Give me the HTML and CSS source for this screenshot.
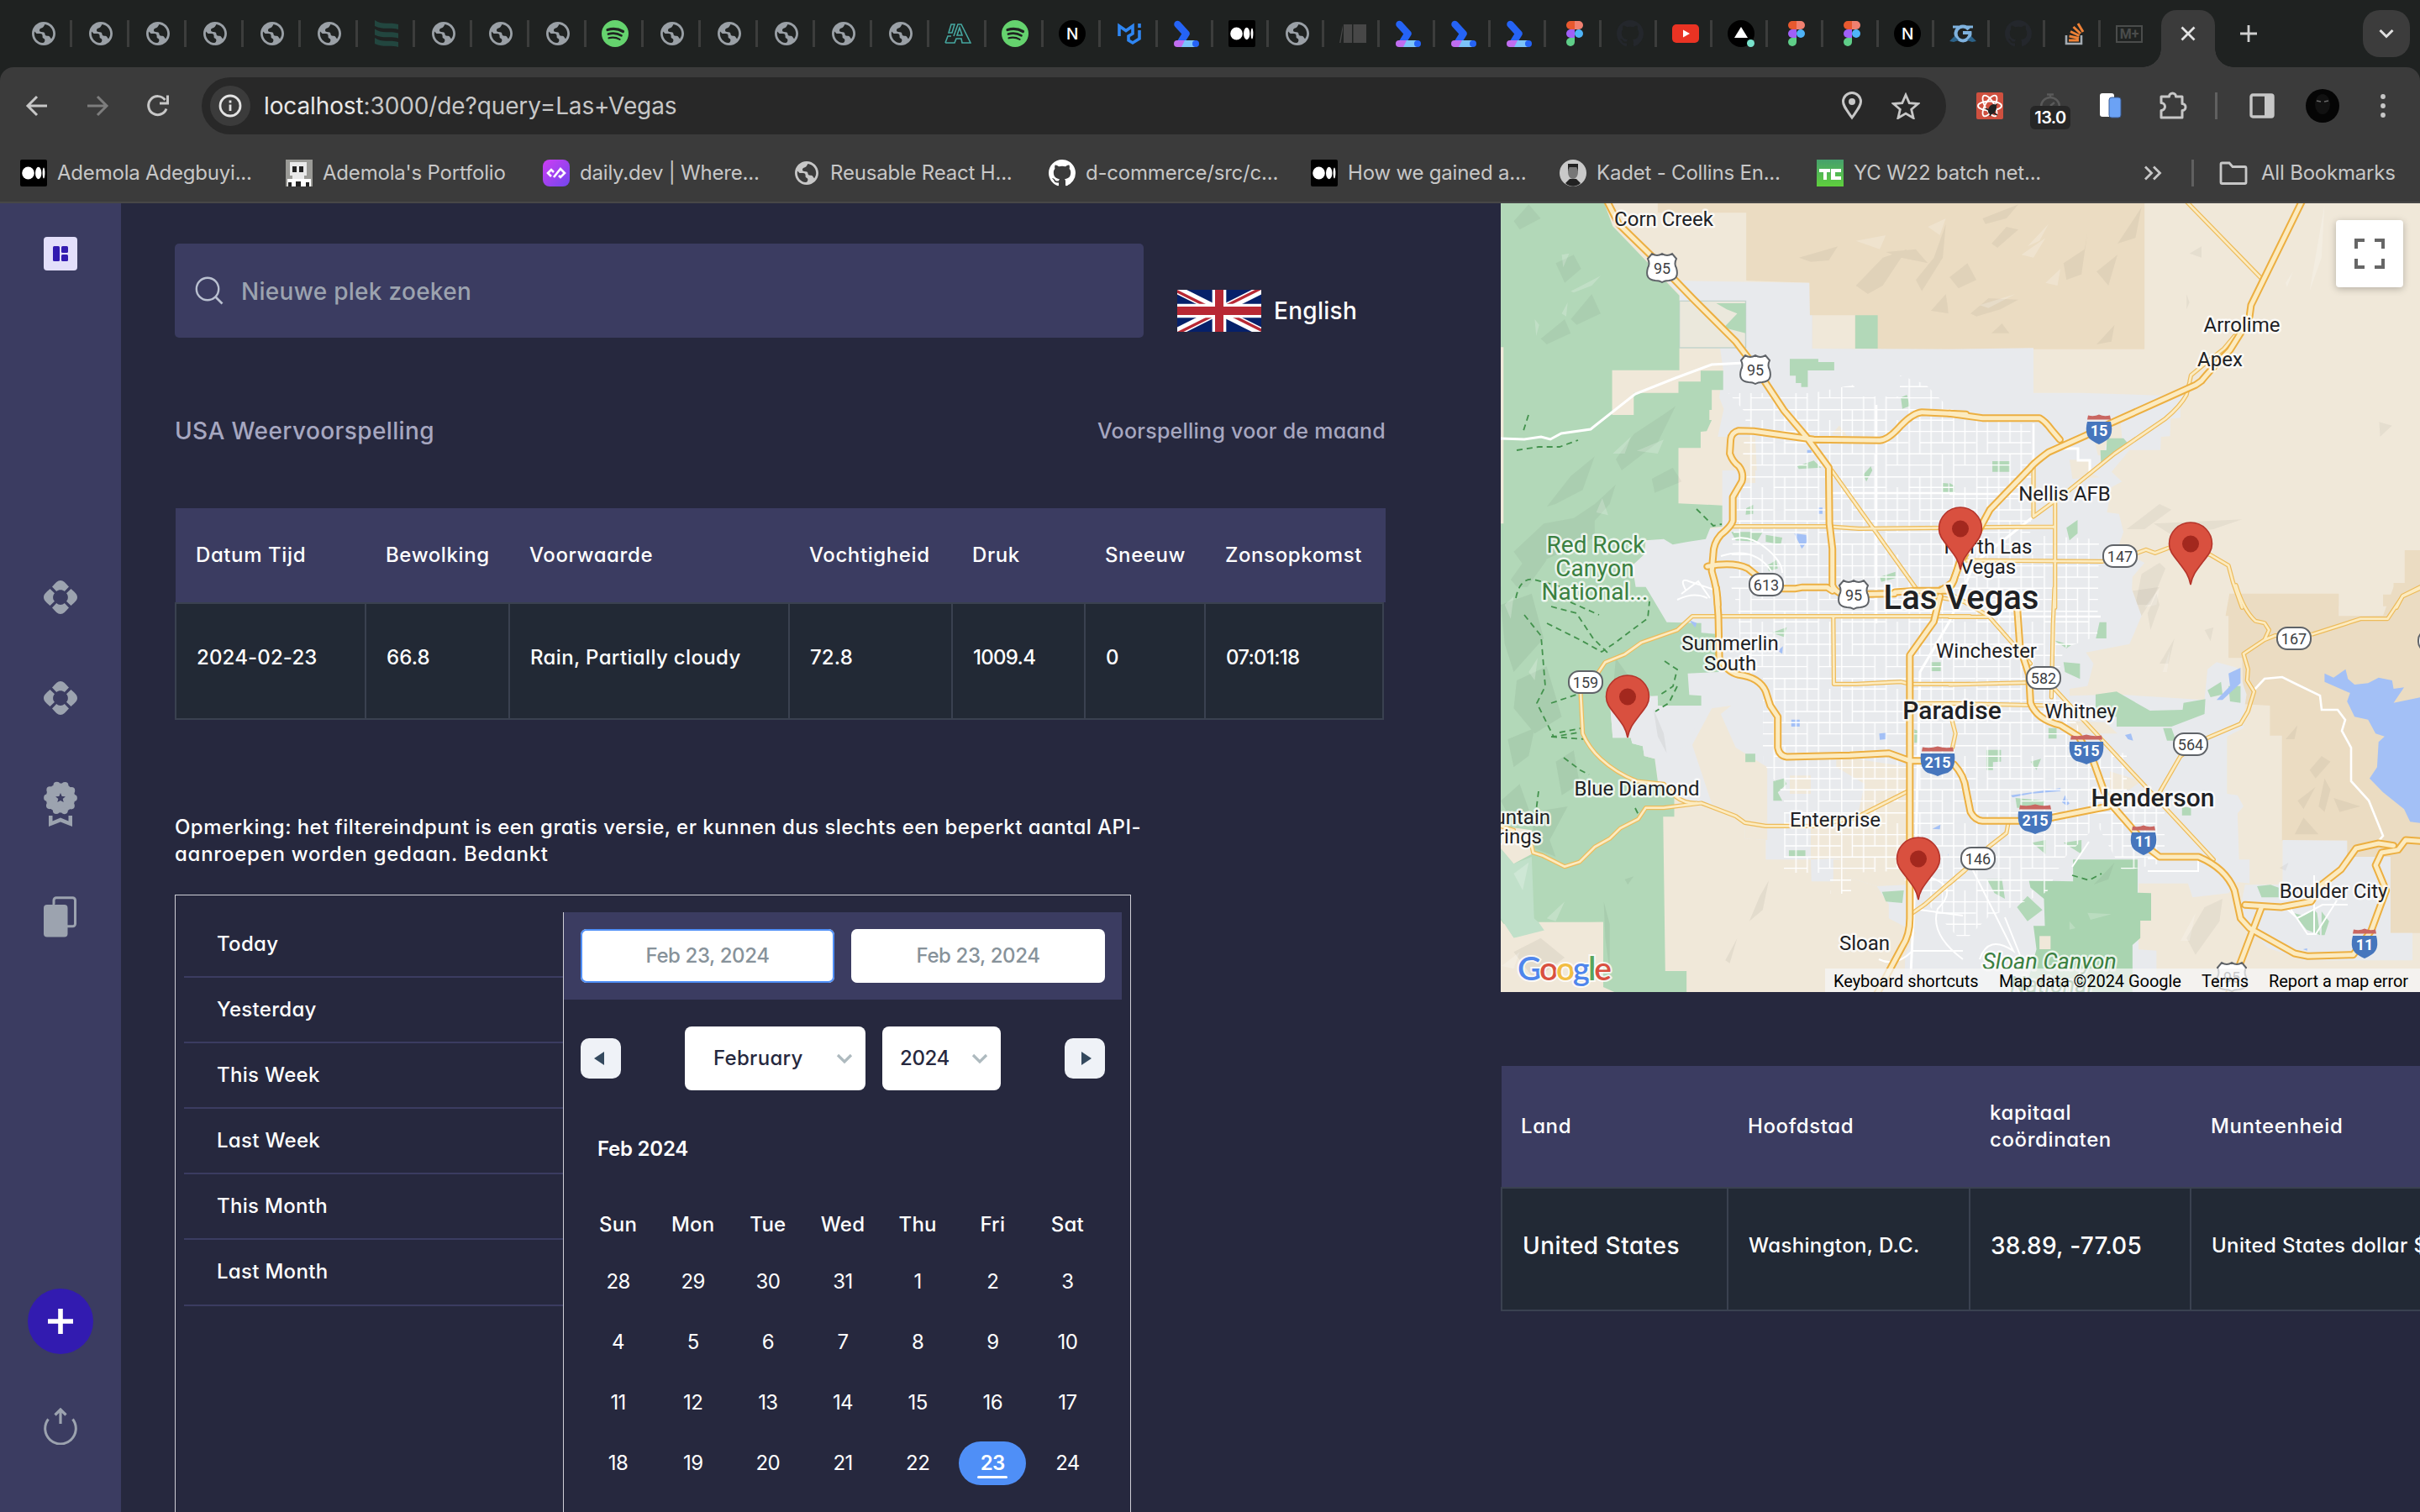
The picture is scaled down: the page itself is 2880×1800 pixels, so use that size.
FILE: index.html
```html
<!DOCTYPE html>
<html lang="nl">
<head>
<meta charset="utf-8">
<title>Weather dashboard</title>
<link rel="stylesheet" href="styles.css">
</head>
<body>
<svg class="defs" width="0" height="0">
  <symbol id="globe" viewBox="2 2 20 20"><path fill="currentColor" d="M12 2C6.48 2 2 6.48 2 12s4.48 10 10 10 10-4.48 10-10S17.52 2 12 2zm-1 17.93c-3.95-.49-7-3.85-7-7.93 0-.62.08-1.21.21-1.79L6 12h3c1.500 0 2 1 2 2v1c0 1 2 1 2 2.500 0 1-.5 2.500-2 2.430zM18.500 16.500C17 15 17.500 14 15 14c-1.500 0-2-1-2-2s-1-1.500-3-1.500S8 8 9.500 7.500 12 6.500 13 4.100c4 .5 7 3.900 7 7.900 0 1.600-.5 3.200-1.500 4.500z"/></symbol>
  <symbol id="spotify" viewBox="0 0 32 32"><circle cx="16" cy="16" r="16" fill="#65d36e"/><g fill="none" stroke="#1f2221" stroke-linecap="round"><path stroke-width="3.200" d="M7 11.500c6-1.800 13-1.200 18.500 2"/><path stroke-width="2.700" d="M8 16.500c5-1.500 11-.9 15.500 1.800"/><path stroke-width="2.200" d="M8.500 21.300c4.500-1.200 9-.7 13 1.600"/></g></symbol>
  <symbol id="github" viewBox="0 0 16 16"><path fill="currentColor" d="M8 0C3.580 0 0 3.580 0 8c0 3.540 2.290 6.530 5.470 7.590.4.070.55-.17.55-.38 0-.19-.01-.82-.01-1.490-2.010.37-2.530-.49-2.690-.94-.09-.23-.48-.94-.82-1.130-.28-.15-.68-.52-.01-.53.63-.01 1.080.58 1.230.82.72 1.210 1.870.87 2.330.66.070-.52.28-.87.51-1.070-1.780-.2-3.640-.89-3.640-3.950 0-.87.31-1.590.82-2.150-.08-.2-.36-1.020.08-2.120 0 0 .67-.21 2.200.82.64-.18 1.320-.27 2-.27s1.360.09 2 .27c1.530-1.040 2.200-.82 2.200-.82.44 1.100.16 1.920.08 2.120.51.56.82 1.270.82 2.150 0 3.070-1.870 3.750-3.650 3.950.29.25.54.73.54 1.480 0 1.070-.01 1.930-.01 2.200 0 .21.15.46.55.38A8.010 8.010 0 0 0 16 8c0-4.420-3.580-8-8-8z"/></symbol>
  <symbol id="next" viewBox="0 0 32 32"><circle cx="16" cy="16" r="16"/><text x="16" y="22.500" text-anchor="middle" font-family="Inter" font-size="19" font-weight="500" fill="#fff">N</text></symbol>
  <symbol id="medium" viewBox="0 0 32 32"><rect width="32" height="32" rx="2"/><ellipse cx="9.500" cy="16" rx="7.300" ry="7.600" fill="#fff"/><ellipse cx="21.700" cy="16" rx="3.700" ry="7.200" fill="#fff"/><ellipse cx="28" cy="16" rx="1.400" ry="6.400" fill="#fff"/></symbol>
  <symbol id="ribbon" viewBox="0 0 32 32"><path d="M5.500 5l10 11L8 28" fill="none" stroke="#2563f5" stroke-width="8.500" stroke-linejoin="round" stroke-linecap="round"/><path fill="#7cc4fa" d="M6 24h20v8H6z"/><path fill="#c06df0" d="M5 24h9l-4 8H5a4 4 0 0 1 0-8z"/><ellipse cx="27" cy="28" rx="4" ry="4" fill="#2563f5"/></symbol>
  <symbol id="figma" viewBox="0 0 20 30"><path fill="#e8592f" d="M5 0h5v10H5A5 5 0 0 1 5 0z"/><path fill="#f08070" d="M10 0h5a5 5 0 0 1 0 10h-5z"/><path fill="#a060f8" d="M5 10h5v10H5a5 5 0 0 1 0-10z"/><circle cx="15" cy="15" r="5" fill="#4fb4f8"/><path fill="#5fce88" d="M5 20h5v5a5 5 0 1 1-5-5z"/></symbol>
  <symbol id="buoy" viewBox="0 0 40 40"><g fill="#9ca3af"><path id="petal" d="M20 0C23.500 0 26 3 30 7.500L24.800 13C22.500 10.500 17.500 10.500 15.200 13L10 7.500C14 3 16.500 0 20 0z"/><use href="#petal" transform="rotate(90 20 20)"/><use href="#petal" transform="rotate(180 20 20)"/><use href="#petal" transform="rotate(270 20 20)"/></g></symbol>
  <symbol id="pin" viewBox="0 0 54 76"><path d="M27 75C25 64 21 59 12.500 48 5 38.500 1.500 34 1.500 26.500a25.500 25.500 0 0 1 51 0c0 7.500-3.500 12-11 21.500C33 59 29 64 27 75z" fill="#d9503f" stroke="#b5342a" stroke-width="1.600"/><circle cx="27" cy="26.500" r="10" fill="#a3281e"/></symbol>
</svg>

<header class="chrome">
  <div class="tabstrip">
    <i class="tab"><svg class="g"><use href="#globe"/></svg></i><i class="tab"><svg class="g"><use href="#globe"/></svg></i><i class="tab"><svg class="g"><use href="#globe"/></svg></i><i class="tab"><svg class="g"><use href="#globe"/></svg></i><i class="tab"><svg class="g"><use href="#globe"/></svg></i><i class="tab"><svg class="g"><use href="#globe"/></svg></i>
    <i class="tab"><svg class="i" viewBox="0 0 32 32"><g fill="#22463f"><path d="M2 0c8 6 18 2 28 5v6C20 8 12 12 2 7z"/><path d="M2 10.500c8 6 18 2 28 5v6c-10-3-18 1-28-4z"/><path d="M2 21c8 6 18 2 28 5v6c-10-3-18 1-28-4z"/></g></svg></i>
    <i class="tab"><svg class="g"><use href="#globe"/></svg></i><i class="tab"><svg class="g"><use href="#globe"/></svg></i><i class="tab"><svg class="g"><use href="#globe"/></svg></i>
    <i class="tab"><svg class="i"><use href="#spotify"/></svg></i>
    <i class="tab"><svg class="g"><use href="#globe"/></svg></i><i class="tab"><svg class="g"><use href="#globe"/></svg></i><i class="tab"><svg class="g"><use href="#globe"/></svg></i><i class="tab"><svg class="g"><use href="#globe"/></svg></i><i class="tab"><svg class="g"><use href="#globe"/></svg></i>
    <i class="tab"><svg class="i" viewBox="0 0 32 32"><path d="M1 27l3-8h4M5 15L8 5h4l-3 10zM1 27h11l2-5h6l1 5h10L20 5h-4l-5 14M18 9l-3 9h6z" fill="none" stroke="#46a7a0" stroke-width="1.600"/></svg></i>
    <i class="tab"><svg class="i"><use href="#spotify"/></svg></i>
    <i class="tab"><svg class="i"><use href="#next"/></svg></i>
    <i class="tab"><svg class="i" viewBox="0 0 32 32"><g fill="none" stroke="#2f86f2" stroke-width="3.600"><path d="M4 19V7l8 5.500L20 7v9l-5 3v5l5 3 8-5V12"/><path d="M28 4v5"/></g></svg></i>
    <i class="tab s"><svg class="i"><use href="#ribbon"/></svg></i>
    <i class="tab s"><svg class="i"><use href="#medium"/></svg></i>
    <i class="tab s"><svg class="g"><use href="#globe"/></svg></i>
    <i class="tab s"><svg class="i" viewBox="0 0 32 32"><path fill="#474747" d="M5 5h10v22H5zM16.500 5H32v22H16.500zM4 6v6L1.500 27H0z"/></svg></i>
    <i class="tab s"><svg class="i"><use href="#ribbon"/></svg></i><i class="tab s"><svg class="i"><use href="#ribbon"/></svg></i><i class="tab s"><svg class="i"><use href="#ribbon"/></svg></i>
    <i class="tab s"><svg class="f"><use href="#figma"/></svg></i>
    <i class="tab s"><svg class="i gh"><use href="#github"/></svg></i>
    <i class="tab s"><svg class="i" viewBox="0 0 32 32"><rect x="0" y="5" width="32" height="22" rx="5" fill="#ea3323"/><path fill="#fff" d="M13 11.500v9l8-4.500z"/></svg></i>
    <i class="tab s"><svg class="i" viewBox="0 0 32 32"><circle cx="16" cy="16" r="16"/><path fill="#fff" d="M16 8l8 13H8z"/><circle cx="27.500" cy="27.500" r="4.500" fill="#79e3cc"/></svg></i>
    <i class="tab s"><svg class="f"><use href="#figma"/></svg></i><i class="tab s"><svg class="f"><use href="#figma"/></svg></i>
    <i class="tab s"><svg class="i"><use href="#next"/></svg></i>
    <i class="tab s"><svg class="i" viewBox="0 0 32 32"><g fill="none" stroke="#7fb2de" stroke-width="4"><path d="M23 11a8.500 8.500 0 1 0 1.500 4H16"/><path d="M4 8h7M28 8h-7" stroke-width="3"/></g><path fill="#2c6288" d="M0 25l6-6 5 5-6 2zM32 25l-6-6-5 5 6 2z"/></svg></i>
    <i class="tab s"><svg class="i gh"><use href="#github"/></svg></i>
    <i class="tab s"><svg class="i" viewBox="0 0 32 32"><path d="M7 18v10h18V18" fill="none" stroke="#a3abb2" stroke-width="2.600"/><g stroke="#ee8136" stroke-width="3"><path d="M10 24h12M10.500 19l11.500 2.500M12 13.500l10.500 5M15.500 8l8.500 8M21 4l6 10"/></g></svg></i>
    <i class="tab s last"><svg class="i" viewBox="0 0 32 32"><rect x="1" y="7" width="30" height="19" fill="none" stroke="#4a4c4b" stroke-width="2"/><text x="16" y="22" text-anchor="middle" font-family="Roboto" font-weight="700" font-size="16" fill="#4a4c4b">M+</text></svg></i>
    <div class="tab-active"><svg width="64" height="68" viewBox="0 0 64 68"><path d="M25 21l15 15M40 21L25 36" transform="translate(-.5 -.5)" stroke="#e3e3e3" stroke-width="2.800"/></svg></div>
    <svg class="plus" width="22" height="22" viewBox="0 0 22 22"><path d="M11 1v20M1 11h20" stroke="#cfcfcf" stroke-width="2.800"/></svg>
    <div class="tabsearch"><svg width="18" height="12" viewBox="0 0 18 12"><path d="M1.500 2L9 9.500 16.500 2" fill="none" stroke="#e0e0e0" stroke-width="3"/></svg></div>
  </div>
  <div class="toolbar">
    <svg class="nav" width="28" height="28" viewBox="0 0 28 28"><path d="M26 14H3M14 3L3 14l11 11" fill="none" stroke="#c7c7c7" stroke-width="3"/></svg>
    <svg class="nav" width="28" height="28" viewBox="0 0 28 28"><path d="M2 14h23M14 3l11 11-11 11" fill="none" stroke="#7d7d7d" stroke-width="3"/></svg>
    <svg class="nav" width="28" height="28" viewBox="0 0 28 28"><path d="M24 17.500A11 11 0 1 1 22.500 7" fill="none" stroke="#c7c7c7" stroke-width="3"/><path d="M25.500 1.500v9.500H16" fill="none" stroke="#c7c7c7" stroke-width="3"/></svg>
    <div class="url">
      <span class="info"><svg width="28" height="28" viewBox="0 0 28 28"><circle cx="14" cy="14" r="12" fill="none" stroke="#e3e3e3" stroke-width="2.800"/><path d="M14 12.500V20M14 7.500v3" stroke="#e3e3e3" stroke-width="2.800"/></svg></span>
      <span class="addr">localhost<em>:3000/de?query=Las+Vegas</em></span>
      <svg width="26" height="34" viewBox="0 0 26 34"><path d="M13 31C6 21 2.500 17 2.500 12a10.500 10.500 0 0 1 21 0c0 5-3.500 9-10.500 19z" fill="none" stroke="#c7c7c7" stroke-width="3"/><circle cx="13" cy="12" r="4" fill="#c7c7c7"/></svg>
      <svg class="star" width="34" height="32" viewBox="0 0 34 32"><path d="M17 3l4.200 9.600 10.400.9-7.900 6.800 2.400 10.200L17 25.100l-9.100 5.400 2.400-10.200-7.900-6.800 10.400-.9z" fill="none" stroke="#c7c7c7" stroke-width="2.800"/></svg>
    </div>
    <svg class="x1" width="32" height="32" viewBox="0 0 32 32"><rect width="32" height="32" rx="2" fill="#cf503f"/><g fill="none" stroke="#fff" stroke-width="1.800"><ellipse cx="16" cy="16" rx="14" ry="5.500"/><ellipse cx="16" cy="16" rx="14" ry="5.500" transform="rotate(60 16 16)"/><ellipse cx="16" cy="16" rx="14" ry="5.500" transform="rotate(120 16 16)"/></g><ellipse cx="19" cy="20" rx="4.500" ry="6.500" fill="#222" transform="rotate(30 19 20)"/><path d="M11 19l14 8M24 14l-8 14" stroke="#222" stroke-width="1.600"/></svg>
    <div class="timer"><svg width="28" height="16" viewBox="0 0 28 16"><path d="M3 16a11 11 0 0 1 22 0M14 5V1M10 1.500h8M14 15l5-4" fill="none" stroke="#5a5a5a" stroke-width="2.500"/></svg><b>13.0</b></div>
    <svg class="x3" width="28" height="34" viewBox="0 0 28 34"><rect x="1" y="2" width="17" height="28" rx="3" fill="#fff"/><rect x="12" y="7" width="14" height="24" rx="3" fill="#6ba2f5" stroke="#3d5d94" stroke-width="1"/></svg>
    <svg class="x4" width="36" height="34" viewBox="0 0 36 34"><path d="M3 6h9.500a4 4 0 1 1 8 0H28v8.500a4 4 0 1 1 0 8V31H3v-8.500a4.500 4.500 0 0 0 0-9z" fill="none" stroke="#c7c7c7" stroke-width="3" stroke-linejoin="round"/></svg>
    <i class="vsep"></i>
    <svg class="x5" width="30" height="30" viewBox="0 0 30 30"><rect x="2" y="2" width="26" height="26" rx="2" fill="none" stroke="#c7c7c7" stroke-width="3.400"/><path fill="#c7c7c7" d="M18 3h10v24H18z"/></svg>
    <svg class="x6" width="40" height="40" viewBox="0 0 40 40"><circle cx="20" cy="20" r="20" fill="#050505"/><ellipse cx="20" cy="18" rx="9" ry="12" fill="#111"/><path d="M13 14l5 1M22 15l5-1" stroke="#666" stroke-width="1.500"/></svg>
    <svg class="x7" width="6" height="28" viewBox="0 0 6 28"><g fill="#c7c7c7"><circle cx="3" cy="3" r="2.900"/><circle cx="3" cy="14" r="2.900"/><circle cx="3" cy="25" r="2.900"/></g></svg>
  </div>
  <div class="bookmarks">
    <a><svg class="i"><use href="#medium"/></svg>Ademola Adegbuyi...</a>
    <a><svg class="i" viewBox="0 0 32 32"><path fill="#9a9a96" d="M0 0h32v32H0z"/><path fill="#e9e9e9" d="M5 3h20v16h-3v4H8v-4H5z"/><path fill="#fff" d="M2 23h28v9H2z"/><path fill="#222" d="M8 8h5v7H8zM16 8h5v7h-5zM12 26h6v6h-6zM3 27h4v5H3zM24 27h4v5h-4z"/></svg>Ademola's Portfolio</a>
    <a><svg class="i" viewBox="0 0 32 32"><defs><linearGradient id="dd" x1="0" y1="0" x2="1" y2="1"><stop offset="0" stop-color="#ce3df3"/><stop offset="1" stop-color="#7147ed"/></linearGradient></defs><rect width="32" height="32" rx="8" fill="url(#dd)"/><path d="M10 20l-4-4 4-4 3 3M13 21l8-10 5 5-5 5-2-2" fill="none" stroke="#fff" stroke-width="2.600"/></svg>daily.dev | Where...</a>
    <a class="gl"><svg class="i"><use href="#globe"/></svg>Reusable React H...</a>
    <a class="wh"><svg class="i"><use href="#github"/></svg>d-commerce/src/c...</a>
    <a><svg class="i"><use href="#medium"/></svg>How we gained a...</a>
    <a><svg class="i" viewBox="0 0 32 32"><circle cx="16" cy="16" r="16" fill="#c9c9c9"/><path fill="#222" d="M10 6h12v8H10zM7 28l5-5h8l5 5c-5 5-13 5-18 0z"/><ellipse cx="16" cy="15" rx="6" ry="8" fill="#777"/><path fill="#222" d="M10 5h12v4H10z"/></svg>Kadet - Collins En...</a>
    <a><svg class="i" viewBox="0 0 32 32"><defs><linearGradient id="tc" x1="0" y1="0" x2="0" y2="1"><stop offset="0" stop-color="#46a06c"/><stop offset="1" stop-color="#5fd03c"/></linearGradient></defs><path fill="url(#tc)" d="M0 0h32v32H0z"/><path fill="#fff" d="M3 11h13v4h-4v9H8v-9H3zM17 11h12v4h-7v5h7v4H17z"/></svg>YC W22 batch net...</a>
    <span class="more"><svg width="22" height="18" viewBox="0 0 22 18"><path d="M2 1.500L9.500 9 2 16.500M12 1.500L19.500 9 12 16.500" fill="none" stroke="#c7c7c7" stroke-width="2.800"/></svg></span>
    <i class="vsep"></i>
    <a class="all"><svg width="34" height="28" viewBox="0 0 34 28"><path d="M2 25V3.500Q2 2 3.500 2H12l4 4.500h14.500Q32 6.500 32 8v17q0 1.500-1.500 1.500h-27Q2 26.500 2 25z" fill="none" stroke="#c7c7c7" stroke-width="2.800"/></svg>All Bookmarks</a>
  </div>
</header>

<div class="app">
  <nav class="sidebar">
    <div class="logo"><svg width="18" height="18" viewBox="0 0 18 18"><g fill="#321bb0"><rect width="8" height="18" rx="1.500"/><rect x="10" width="8" height="8" rx="1.500"/><rect x="10" y="10" width="8" height="8" rx="1.500"/></g></svg></div>
    <svg class="n1" width="40" height="40"><use href="#buoy"/></svg>
    <svg class="n2" width="40" height="40"><use href="#buoy"/></svg>
    <svg class="n3" width="40" height="55" viewBox="0 0 40 55"><circle cx="20" cy="20" r="17.400" fill="#9ca3af"/><circle cx="20" cy="20" r="15.800" fill="none" stroke="#9ca3af" stroke-width="8.200" stroke-linecap="round" stroke-dasharray="0 9.927"/><path fill="#3b3c61" d="M20 14l1.700 3.900 4.200.3-3.200 2.800 1 4.100-3.700-2.200-3.700 2.200 1-4.100-3.200-2.800 4.200-.3z"/><path fill="#9ca3af" d="M6 41h4.500v6.500l9.500-4 9.500 4V41H34v13l-14-5.500L6 54z"/></svg>
    <svg class="n4" width="40" height="49" viewBox="0 0 40 49"><rect x="12" y="1.800" width="25.500" height="34" rx="3" fill="none" stroke="#9ca3af" stroke-width="3"/><path fill="#3b3c61" d="M13.500 9h15v25h-15z"/><rect y="10" width="28.500" height="38.500" rx="4" fill="#9ca3af"/></svg>
    <div class="add"><svg width="30" height="30" viewBox="0 0 30 30"><path d="M15 0v30M0 15h30" stroke="#fff" stroke-width="5.600"/></svg></div>
    <svg class="n6" width="40" height="44" viewBox="0 0 40 44"><path d="M5.500 13.500a18.300 18.300 0 1 0 29 0" fill="none" stroke="#9ca3af" stroke-width="3"/><path d="M20 19V3M13.500 8.500L20 2l6.500 6.500" fill="none" stroke="#9ca3af" stroke-width="3.200"/></svg>
  </nav>

  <main class="main">
    <div class="top">
      <div class="search"><svg width="34" height="34" viewBox="0 0 34 34"><circle cx="15" cy="15" r="13.200" fill="none" stroke="#b9c0d0" stroke-width="2.400"/><path d="M24.500 24.500l8 8" stroke="#b9c0d0" stroke-width="2.600"/></svg><span>Nieuwe plek zoeken</span></div>
      <div class="lang">
        <svg width="100" height="50" viewBox="0 0 60 30" preserveAspectRatio="none"><defs><clipPath id="uk"><path d="M30 15h30v15zv15H0zH0V0zV0h30z"/></clipPath></defs><path fill="#06206a" d="M0 0h60v30H0z"/><path d="M0 0l60 30M60 0L0 30" stroke="#fff" stroke-width="6"/><path d="M0 0l60 30M60 0L0 30" stroke="#b82834" stroke-width="4" clip-path="url(#uk)"/><path d="M30 0v30M0 15h60" stroke="#fff" stroke-width="10"/><path d="M30 0v30M0 15h60" stroke="#b82834" stroke-width="6"/></svg>
        <span>English</span>
      </div>
    </div>
    <div class="heading"><h1>USA Weervoorspelling</h1><span>Voorspelling voor de maand</span></div>
    <div class="wtable">
      <div class="row head"><span>Datum Tijd</span><span>Bewolking</span><span>Voorwaarde</span><span>Vochtigheid</span><span>Druk</span><span>Sneeuw</span><span>Zonsopkomst</span></div>
      <div class="row body"><span class="num">2024-02-23</span><span class="num">66.8</span><span>Rain, Partially cloudy</span><span class="num">72.8</span><span class="num tight">1009.4</span><span>0</span><span class="tight">07:01:18</span></div>
    </div>
    <p class="note">Opmerking: het filtereindpunt is een gratis versie, er kunnen dus slechts een beperkt aantal API-<br><span>aanroepen worden gedaan. Bedankt</span></p>
    <div class="picker">
      <ul class="ranges"><li>Today</li><li>Yesterday</li><li>This Week</li><li>Last Week</li><li>This Month</li><li>Last Month</li></ul>
      <div class="cal">
        <div class="dates"><span class="on">Feb 23, 2024</span><span>Feb 23, 2024</span></div>
        <div class="months">
          <span class="arrow"><svg width="12" height="16" viewBox="0 0 12 16"><path fill="#34495e" d="M12 0v16L0 8z"/></svg></span>
          <span class="sels"><span class="sel m">February<svg width="20" height="14" viewBox="0 0 20 14"><path d="M2 3l8 8 8-8" fill="none" stroke="#aebabf" stroke-width="3.200"/></svg></span><span class="sel y">2024<svg width="20" height="14" viewBox="0 0 20 14"><path d="M2 3l8 8 8-8" fill="none" stroke="#aebabf" stroke-width="3.200"/></svg></span></span>
          <span class="arrow next"><svg width="12" height="16" viewBox="0 0 12 16"><path fill="#34495e" d="M0 0v16l12-8z"/></svg></span>
        </div>
        <div class="mname">Feb 2024</div>
        <div class="week"><span>Sun</span><span>Mon</span><span>Tue</span><span>Wed</span><span>Thu</span><span>Fri</span><span>Sat</span></div>
        <div class="days"><span>28</span><span>29</span><span>30</span><span>31</span><span>1</span><span>2</span><span>3</span><span>4</span><span>5</span><span>6</span><span>7</span><span>8</span><span>9</span><span>10</span><span>11</span><span>12</span><span>13</span><span>14</span><span>15</span><span>16</span><span>17</span><span>18</span><span>19</span><span>20</span><span>21</span><span>22</span><span><b>23</b></span><span>24</span></div>
      </div>
    </div>
  </main>

  <aside class="side">
    <div class="map">
      <svg width="1094" height="939" viewBox="0 0 1094 939">
        <defs>
          <pattern id="grid" width="80.400" height="80" patternUnits="userSpaceOnUse" x="3" y="5"><path d="M.8 0v80M13.400 0v53M26.800 0v80M40.200 0v40M40.200 53v27M53.600 0v80M67 13v53M0 .8h80M0 13.300h54M0 26.600h80M13 40h67M0 53.300h80M0 66.600h40M54 66.600h26" stroke="#fff" stroke-width="1.400" fill="none"/></pattern>
          <g id="hw">
            <g transform="translate(-6 -2) scale(.35714 .33333)"><path d="M372 0L410 80 520 195 660 350 800 500 850 570 895 640 960 745 1035 840 1110 950 1112 1150 1122 1240V1370Q1130 1395 1160 1403L1330 1400M1568 760L1420 752Q1390 755 1350 800 1310 850 1280 853L1060 850 860 820 810 818Q785 825 783 850L780 900Q790 930 810 945 828 970 820 1000L790 1055V1140Q785 1160 750 1190 725 1220 725 1260L720 1320Q740 1390 740 1440M705 1303Q790 1285 840 1310L880 1345M930 1382H1000L1020 1378H1105L1122 1390M1330 1395L1400 1390H1500Q1525 1370 1530 1340L1545 1290"/></g>
            <g transform="translate(534 -2) scale(.35714 .33333)"><path d="M1174 0L1005 370 1000 410 970 470 935 530Q870 600 840 640L820 655 540 790 455 835 330 895Q280 935 270 950L135 1100 100 1170 36 1290 10 1360-30 1390M0 757L110 773H300Q320 785 340 815L368 850"/></g>
            <g transform="translate(-6 458) scale(.35714 .33333)"><path d="M735 0L742 100 745 250Q770 300 810 310 880 320 900 370L915 420 940 460V570Q945 600 970 603L1180 598 1310 590 1380 617H1450M1480 30L1460 120 1380 240V1180Q1380 1240 1355 1280L1270 1450"/></g>
            <g transform="translate(534 458) scale(.35714 .33333)"><path d="M225 60L235 210 265 310 270 410Q290 470 370 490L430 530 480 620 520 740 545 780 610 860 670 935 700 960H830Q920 1000 950 1080L970 1180 1000 1215 1150 1305 1195 1315 1345 1310 1405 1225 1455 1080 1420 990 1440 945 1495 935 1520 900 1580 905M-60 617L15 630Q50 670 55 720L70 800Q85 830 110 832H285L530 780M1480 920L1430 912 1355 930 1305 1005 1240 1060 1205 1120 1105 1140 985 1132M1040 1140L930 1450"/></g>
          </g>
          <g id="mr">
            <g transform="translate(-6 -2) scale(.35714 .33333)"><path d="M1120 960L1400 1380M792 1160H1100L1210 1168 1540 1165"/></g>
            <g transform="translate(534 -2) scale(.35714 .33333)"><path d="M790 0L1040 275M950 480L915 525Q860 570 805 620L800 645 790 690Q770 730 720 775L550 900 400 1030 280 1125V930M352 1065V1450M110 1163L350 1161M30 1281L510 1285 625 1255 655 1243 685 1255 735 1235M803 1240L870 1262 930 1300 945 1360 975 1450M1490 1450L1510 1408 1580 1370"/></g>
            <g transform="translate(-6 458) scale(.35714 .33333)"><path d="M1580 101H655L605 150 485 195 430 237 365 265 330 320 283 375 290 520Q310 570 350 610 400 660 470 690L560 700 600 745Q630 770 670 768M0 845L60 865M120 920L125 945 155 955 230 995 280 978 330 925 380 895 415 858 475 825 500 785H560L685 768 800 815 830 838 900 850H1060L1200 820 1375 725M1125 101L1127 343H1200L1350 335 1380 343H1580M1570 1000L1430 1130 1390 1160M1520 470L1532 520 1522 570M1400 412H1570M1400 20L1568 50"/></g>
            <g transform="translate(534 458) scale(.35714 .33333)"><path d="M350 0L345 130 340 390M-30 0L130 100 270 270M0 103H130M0 345L260 338M0 412L340 420M350 360L880 970M955-10Q980 80 1020 118L1050 125 1065 150 1050 185 980 235 995 290 992 330 1015 370 995 440 970 485 860 535 770 600 700 730M1580-5L1510 30 1460 110H1370L1210 165 1085 170 1050 185M195 845L190 875 130 925 50 1010 0 1055"/></g>
          </g>
          <g id="us"><path d="M-17-11l5-6q6 4 12 0 6 4 12 0l5 6q-3 6 0 11 4 14-9 15-5 0-8 2-3-2-8-2-13-1-9-15 3-5 0-11z" fill="#fff" stroke="#5f6368" stroke-width="2"/><text y="6.500">95</text></g>
          <g id="i2"><path d="M-14-9h28q4 16-5 22-6 4-9 5-3-1-9-5-9-6-5-22z" fill="#4676bd"/><path d="M-14-11.500l1-5q7 2 13-1 6 3 13 1l1 5z" fill="#c96661"/></g>
          <g id="i3"><path d="M-20-9h40q2 18-8 23-8 2-12 4-4-2-12-4-10-5-8-23z" fill="#4676bd"/><path d="M-19-11.500l1-5q9 2 18-1 9 3 18 1l1 5z" fill="#c96661"/></g>
          <rect id="st" x="-20" y="-13" width="40" height="26" rx="12" fill="#fff" stroke="#5f6368" stroke-width="2"/>
        </defs>
        <path fill="#f0e8d9" d="M0 0h1094v939H0z"/>
        <g transform="translate(-6 -2) scale(.35714 .33333)">
          <path fill="#ebdcc2" d="M540 0H1570V528H1045V290L835 282V40H540z"/>
          <path fill="#f0e8d9" d="M1055 406H1198V525H1055z"/>
          <path fill="#e8eaed" d="M570 282L1045 290 1047 406H1055V525L1570 527V1445H400V1200L755 1165V960H870L865 840H740L760 740 745 700 758 600 748 525 620 520 612 330z"/>
          <path fill="#ebe8dc" stroke="#c3d3cc" stroke-width="4" d="M612 355H833V522H612z"/>
          <g fill="#b2d8b8"><path d="M17 0H360L390 88 612 335V602H388V762H460V683H609V643H683V604H758V673H720V744H712V780H720L703 820 683 822V880H609V1078L755 1085V1160L715 1165 700 1205 640 1215 590 1225 560 1205 500 1210 495 1260 455 1300 470 1400 500 1445H17zM735 363H833V470L760 450 805 400 770 385zM1198 406H1273V525H1198zM980 562H1075V573H1128V603H1040V662H1018V648H1000V622H980zM1490 1005L1525 1008 1528 1040H1487zM835 1095L858 1083V1115L833 1118zM1280 1340L1332 1322V1345L1285 1358zM870 1385L970 1370 975 1415 880 1420zM1350 700L1370 690 1380 730 1355 740zM1005 945L1060 925 1085 950 1010 955zM1225 975L1250 945 1255 960 1235 1000zM785 1180L890 1180 870 1215 800 1210zM900 1190L955 1200 950 1225 900 1215zM905 1300L935 1280 940 1310 910 1320z"/></g>
          <path fill="#a3c0f6" d="M1075 1093H1089V1115H1075zM1038 887H1052V898H1038zM995 1185L1035 1190 1038 1215 1020 1240z"/>
          <path fill="#f0e8d9" d="M17 520H26V1150H17zM795 945L865 950V1005L830 1005zM1120 830L1145 800 1170 835z"/>
          <g fill="#000" opacity=".045"><path d="M200 220L260 190 285 240 230 290zM250 420L320 330 350 400 270 440zM60 70L110 10 150 60 80 100zM150 490L230 420 250 470 170 510zM1010 200L1140 160 1110 210 1050 215zM1200 300L1290 200 1370 170 1290 300 1240 330zM1300 180L1400 170 1440 220 1350 200zM1400 280L1460 200 1500 80 1490 200 1420 320zM1450 390L1500 330 1510 400zM400 920L460 830 560 760 600 730 540 860 420 960zM170 1090L250 980 330 910 290 1030 200 1080zM300 1110L400 1010 380 1080 330 1140zM60 1250L160 1150 260 1130 330 1080 330 1200 100 1310zM520 990L590 950 620 1000 530 1040zM50 1350L130 1230 170 1280 90 1400z"/></g>
          <g fill="#fff" opacity=".2"><path d="M220 190L245 185 225 235zM250 320L350 265 320 300 260 325zM130 420L145 440 135 480zM390 900L450 840 430 900zM335 1110L355 1060 375 1120zM1200 140L1300 120 1280 170zM1440 90L1500 60 1480 120zM470 890L560 850 540 900zM220 400L240 360 235 410z"/></g>
        </g>
        <g transform="translate(534 -2) scale(.35714 .33333)">
          <path fill="#ebdcc2" d="M-4 0H650V527H-4zM933 1403H1297V1445H933zM1445 1403H1480V1362H1517V1245H1570V1445H1445z"/>
          <path fill="#e8eaed" d="M-4 527L280 523V683H440L700 692 795 690 770 720V772L737 775 735 838 705 840 703 887H600L540 965 575 1000 540 1020 525 1110 565 1115 580 1180 560 1240 650 1290 610 1340 605 1445H-4z"/>
          <path fill="#f0e8d9" d="M400 922L465 925 470 970 500 985 410 990zM485 860L570 780 575 845 520 870 515 910 495 905z"/>
          <path fill="#b2d8b8" d="M525 845L580 845 600 870 505 935 503 888H523zM143 927H201V965H143zM390 1165L427 1137V1185L400 1210zM0 1005L17 1015V1040H0z"/>
          <g fill="#000" opacity=".045"><path d="M110 60L230 10 190 60 120 80zM140 150L190 90 230 100 160 165zM0 270L60 220 90 280 30 310zM70 400L130 345 230 350 170 385 90 410zM380 220L450 170 460 110 440 260 390 280zM490 250L560 190 530 300zM560 150L640 20 620 130zM490 510L550 440 540 500zM140 470L175 435 200 470zM800 185L840 160 840 200zM790 330L800 360 790 385zM1432 787L1475 800 1435 840zM680 1150L975 1135 880 1170 740 1190zM640 1330L700 1290 720 1310 670 1440 620 1440zM590 1170L700 1080 740 1100 650 1170z"/></g>
          <g fill="#fff" opacity=".22"><path d="M100 370L220 330 130 380zM240 190L320 130 280 200zM320 290L370 240 360 300zM1200 320L1250 10 1240 200zM1120 290L1145 250 1125 305zM260 160L330 80 300 140z"/></g>
        </g>
        <g transform="translate(-6 458) scale(.35714 .33333)">
          <path fill="#e8eaed" d="M480-4H1572V1450H1360L1365 1310 1400 1230 1310 1180V1130L1270 1065 1165 1030 1160 970H1125V1048H1052L1050 970H900V900L830 895V850L820 830 690 770 595 745 540 690 530 610 390 540 380 400z"/>
          <path fill="#f0e8d9" d="M720 430L785 420 750 450 800 570 905 640V900L830 895V840L720 770 655 560zM1135 600L1380 640 1372 1060 1270 1065 1165 1030 1160 970 1125 965 1050 970V850L1200 840 1230 700 1135 640zM980 670H1050V735H980z"/>
          <path fill="#b2d8b8" d="M17-4H500L570 122 685 125V160L745 165V300L640 305 645 382 685 385V420H540V385L380 395 390 535H450L455 555 490 565 495 600 530 610 540 690 595 730V817H558L565 1368H636V1450H410L358 1425V1193H145L17 1200zM832 592H865V622H832zM977 937H1032V958H977zM1395 505L1408 510V553H1395zM1450 265H1483V297H1450zM1287 1085L1360 1080 1355 1125 1300 1120zM920 160L970 140 960 175zM925 690L960 680 970 700 940 730 955 760H925z"/>
          <path fill="#e8eaed" d="M380 400L515 385 540 400 540 420 680 420 650 560 540 600 530 610 495 600 490 565 455 555 450 535H390z"/>
          <path fill="#c0e0c9" d="M17 930L60 985 120 960 128 1180 170 1220 60 1250 17 1180z"/>
          <path fill="#f0e8d9" d="M17 850L120 865V950L60 985 17 930zM17 1185L60 1250 170 1235 145 1197 358 1193V1450H17z"/>
          <path fill="#a3c0f6" d="M985 470H1013V495H985zM1278 520L1303 517 1300 540 1280 542zM645 115L670 125 665 142zM940 225L957 208 955 235zM1455 860L1482 845 1480 862zM1507 950L1550 945V955L1510 962z"/>
          <g fill="#000" opacity=".05"><path d="M17 60L120 20 160 180 60 300 30 200zM70 330L170 280 220 460 130 520 60 430zM40 540L130 500 110 600 60 640zM200 620L260 580 280 700 220 740zM17 760L80 700 120 820 60 850zM120 800L240 780 180 900 200 960 130 930zM360 1120L380 1200V1370L365 1250zM430 1040L460 1030 440 1060zM525 430L560 520 570 590 540 530zM845 1190L880 1100 910 1045 890 1150zM765 1330L805 1250 780 1340zM60 1300L150 1250 230 1320 130 1400zM400 250L440 310 430 380 390 380z"/></g>
          <g fill="#fff" opacity=".22"><path d="M30 60L60 30 50 110zM110 300L140 250 130 330zM60 1020L110 980 90 1080zM170 1180L230 1120 200 1190zM20 1350L80 1300 60 1360z"/></g>
        </g>
        <g transform="translate(534 458) scale(.35714 .33333)">
          <path fill="#ebdcc2" d="M933 20H1297V100L1445 98 1480-4H1572V1232H1470V960H1325V902H1108V527H1068V420L980 415 975 250H930V100H920z"/>
          <path fill="#e8eaed" d="M-4-4H605L640 100 600 200 455 230 480 270 460 350 400 360V385L560 380 850 400 860 290 890 265 960 285 990 380 985 415 980 500 925 530V735L960 740 980 780 960 805 965 970H1000V1055L960 1050 930 1090 810 1105 795 1055H630V1450H-4zM1110 900L1325 902V960H1470V1232H1543V1330H1180L1060 1285 1000 1210 970 1140 985 1060H1110zM620 1290L690 1295V1450H620z"/>
          <path fill="#f0e8d9" d="M400 475L520 480 560 520 410 520zM535 655L640 690 600 720H535z"/>
          <path fill="#a9d4b0" d="M265 1045L412 1048V970H627V1088L672 1090V1188H636V1250L610 1275V1450H250L290 1290 280 1207H318L315 1110 270 1070z"/>
          <path fill="#f0e8d9" d="M300 1243H337V1290H300z"/>
          <path fill="#b2d8b8" d="M487 380L557 370 668 438 777 435 780 410 853 397 850 450 740 495H557V460H487zM500 122H523V180H488zM123 578H172V620L145 622V650H123zM330 500H357V538H330zM1145 1160L1180 1170 1210 1145 1225 1160 1235 1240 1190 1220zM1240 1155L1265 1190 1250 1240H1240zM1025 1065L1070 1060 1097 1070V1105L1040 1105zM775 780L805 785V812H775zM380 265L435 270V325L385 300zM860 365L905 335 910 380 870 390zM930 350L970 350V410L935 405zM345 185L405 205 390 215zM270 620L305 610 290 650zM225 1140L260 1100 310 1150 260 1190zM125 1040L175 1040 185 1110 150 1090zM220 750L320 760 310 785H225zM380 910L440 900 440 950zM275 910L320 900 320 950zM712 500L740 500 755 545 725 545z"/>
          <path fill="#a3c0f6" d="M1250 305L1280 320 1320 290 1328 325 1350 345 1395 340 1430 320 1475 330 1480 360 1515 355 1480 410 1572 390V840L1535 835 1515 790 1445 730 1400 680 1425 640 1430 550 1450 530 1420 520 1395 470 1350 460 1325 405 1335 375 1250 335zM970 285V340L910 400 890 400 935 350 930 305zM205 740L370 715 370 725 270 735 210 748zM375 765L385 740 400 770 390 777zM585 525L605 520 612 545 595 540zM1178 1290L1192 1287V1295z"/>
          <g fill="#000" opacity=".045"><path d="M610 10L700-4 640 100zM660 90L690 20 700 60 670 150zM850 150L880 140 870 190zM700 270L750 180 730 270zM1120 540L1160 490 1150 540zM1200 650L1240 600 1270 620 1220 680zM1160 760L1220 710 1180 790zM1280 750L1370 780 1300 800zM1230 780L1250 680 1270 720 1250 800zM1180 820L1230 880 1150 880zM790 1250L850 1140 910 1110 900 1190 820 1310zM480 1060L550 980 530 1040zM1100 1000L1130 980 1120 1010z"/></g>
          <g fill="#fff" opacity=".2"><path d="M650 70L700 0 690 60zM400 1190L420 1215 400 1220zM460 1160L540 1165 470 1185zM770 1260L820 1160 800 1260zM710 300L735 220 725 300z"/></g>
        </g>
        <path fill="url(#grid)" d="M271 226h100l49-10 5 14h50V205l30 10 30 30 95 20 4 65-4 65 82 5-2 115-40 15-10 50 45 70 40 5v55l45 0v75l-50 10-30-55-40 40-20 40-70 30-30 30-60-65-20-20-53 2v25h-25v-25h-55v-92l-25-40V560h-25l-5-80-10-30 6-70 8-50 6-80z"/>
        <g fill="none" stroke="#fff" stroke-width="2">
          <path d="M220 460q-8-15 4-10l30 10M215 465l20-15 14 20M210 472q20-10 36-2M275 400q20-6 40 10t20 30M262 420q40-12 60 18M500 800q50 10 20 40-10 30 30 60M450 900q20 10 40-10l60 0M490 840l60 8M560 790l20 40 30 60q-30-20-40 10M600 850l20 50M700 760l-20 30M770 780h60v15h-60M940 840l20 30 10 0 25-40M968 800v70M930 835l18 16 30-16h30"/>
          <path stroke-width="3" d="M0 280l28 1 20-3 11 3 13-7 35-5 10-8 43-34 48-19 43-16 39-2M669 292h18v14l14 0v15M634 373l-70 55-30 70-35 60-6 250-5 110"/>
          <path stroke-width="2.600" d="M896 580l13-14 21-2 18 9 27 13 2 17h19l9 12-4 13 11 20v40l21 23 17 42-6 7M391 345h150M534 346h100M447 240v260M534 492h180M634 262v90"/>
        </g>
        <g fill="none" stroke="#43924d" stroke-width="1.800" stroke-dasharray="7 5"><path d="M33 252l-7 22M19 294l26-4 25 0 22-8M233 364l20 20 10-2M18 470q5-25 22-22l30 8M28 490l20 25 5 60-10 20 20 40 30-5M55 500l40 20 25 14 15-10 40-30 2-20M60 480l30 8 20 30 20 20M72 470l45 20M195 545l15 10-5 20-15 10M210 575l-10 20-16 10M60 595l30-10M70 630l25-5M60 635l40 3M75 660l20 15 10 5M45 700l-5 40M160 720l5 10M680 800l20 6 15-8"/></g>
        <use href="#mr" class="mr c"/><use href="#mr" class="mr f"/>
        <use href="#hw" class="hw c"/><use href="#hw" class="hw f"/>
        <g class="shield">
          <g transform="translate(192 77)"><use href="#us"/></g><g transform="translate(303 198)"><use href="#us"/></g><g transform="translate(420 466)"><use href="#us"/></g><g transform="translate(870 921)"><use href="#us"/></g>
          <g transform="translate(316 454)"><use href="#st"/><text y="6.500">613</text></g>
          <g transform="translate(737 420)"><use href="#st"/><text y="6.500">147</text></g>
          <g transform="translate(101 570)"><use href="#st"/><text y="6.500">159</text></g>
          <g transform="translate(944 518)"><use href="#st"/><text y="6.500">167</text></g>
          <g transform="translate(646 565)"><use href="#st"/><text y="6.500">582</text></g>
          <g transform="translate(821 644)"><use href="#st"/><text y="6.500">564</text></g>
          <g transform="translate(568 780)"><use href="#st"/><text y="6.500">146</text></g>
          <g transform="translate(1112 521)"><use href="#st"/></g>
        </g>
        <g class="shield inter">
          <g transform="translate(712 269)"><use href="#i2"/><text y="8">15</text></g>
          <g transform="translate(765 758)"><use href="#i2"/><text y="8">11</text></g>
          <g transform="translate(1028 881)"><use href="#i2"/><text y="8">11</text></g>
          <g transform="translate(520 664)"><use href="#i3"/><text y="8">215</text></g>
          <g transform="translate(697 650)"><use href="#i3"/><text y="8">515</text></g>
          <g transform="translate(636 733)"><use href="#i3"/><text y="8">215</text></g>
        </g>
        <g class="labels" transform="translate(0 1)">
          <text x="194" y="26">Corn Creek</text><text x="882" y="152">Arrolime</text><text x="856" y="193">Apex</text><text x="671" y="353">Nellis AFB</text><text x="580" y="416">North Las</text><text x="580" y="440">Vegas</text><text x="273" y="531">Summerlin</text><text x="273" y="555">South</text><text x="578" y="540">Winchester</text><text x="690" y="612">Whitney</text><text x="162" y="704">Blue Diamond</text><text x="398" y="741">Enterprise</text><text x="59" y="738" class="end">Mountain</text><text x="49" y="761" class="end">Springs</text><text x="433" y="888">Sloan</text><text x="991" y="826">Boulder City</text>
          <text x="548" y="482" class="city">Las Vegas</text><text x="537" y="613" class="town">Paradise</text><text x="776" y="717" class="town">Henderson</text>
          <text x="113" y="415" class="park">Red Rock</text><text x="112" y="443" class="park">Canyon</text><text x="112" y="471" class="park">National...</text>
          <text x="653" y="911" class="park it">Sloan Canyon</text><text x="655" y="939" class="park it">National</text>
        </g>
        <use href="#pin" x="520" y="361" width="54" height="76"/><use href="#pin" x="794" y="379" width="54" height="76"/><use href="#pin" x="124" y="561" width="54" height="76"/><use href="#pin" x="470" y="754" width="54" height="76"/>
        <text class="google" x="20" y="925" textLength="112"><tspan fill="#4f86ec">G</tspan><tspan fill="#d9503f">o</tspan><tspan fill="#f2bd42">o</tspan><tspan fill="#4f86ec">g</tspan><tspan fill="#58a55c">l</tspan><tspan fill="#d9503f">e</tspan></text>
      </svg>
      <div class="full"><svg width="36" height="36" viewBox="0 0 36 36"><path d="M2 12V2h10M24 2h10v10M34 24v10H24M12 34H2V24" fill="none" stroke="#666" stroke-width="4"/></svg></div>
      <div class="attr"><span>Keyboard shortcuts</span><span>Map data ©2024 Google</span><span>Terms</span><span>Report a map error</span></div>
    </div>
    <div class="ctable">
      <div class="row head"><span>Land</span><span>Hoofdstad</span><span>kapitaal<br>coördinaten</span><span>Munteenheid</span></div>
      <div class="row body"><span class="big">United States</span><span>Washington, D.C.</span><span class="big num">38.89, -77.05</span><span>United States dollar $</span></div>
    </div>
  </aside>
</div>
</body>
</html>
```
FILE: styles.css
```css
* { box-sizing: border-box; margin: 0; padding: 0; }
body {
  width: 2880px; height: 1800px; overflow: hidden;
  display: flex; flex-direction: column;
  background: #26283e; color: #fff;
  font: 550 24px/32px Inter, "Liberation Sans", sans-serif;
  font-feature-settings: "cv11";
  letter-spacing: .45px;
}
svg { display: block; flex: none; }
.defs { position: absolute; }
i, em { font-style: normal; }

/* browser chrome */
.chrome { height: 242px; flex: none; background: #1f2221; border-bottom: 2px solid #474747; font-feature-settings: normal; font-weight: 400; letter-spacing: -.2px; }
.tabstrip { height: 80px; display: flex; align-items: center; padding-left: 18px; }
.tab { width: 68px; height: 32px; flex: none; display: flex; align-items: center; justify-content: center; border-right: 3px solid #3c3d3c; padding-left: 3px; }
.tab.s { width: 66px; }
.tab.last { border-color: transparent; }
.g { width: 28px; height: 28px; color: #9aa0a6; }
.i { width: 32px; height: 32px; }
.f { width: 20px; height: 30px; }
.gh { color: #24272c; }
.tab.s svg { position: relative; left: 1px; }
.tab-active { position: relative; align-self: flex-end; width: 64px; height: 68px; margin-left: 6px; flex: none; background: #3b3b3b; border-radius: 18px 18px 0 0; }
.tab-active::before, .tab-active::after { content: ""; position: absolute; bottom: 0; width: 22px; height: 22px; }
.tab-active::before { left: -22px; background: radial-gradient(circle at 0 0, transparent 21.5px, #3b3b3b 22px); }
.tab-active::after { right: -22px; background: radial-gradient(circle at 100% 0, transparent 21.5px, #3b3b3b 22px); }
.plus { margin-left: 29px; }
.tabsearch { margin: 0 12px 0 auto; width: 56px; height: 56px; border-radius: 20px; background: #3c3c3c; display: flex; align-items: center; justify-content: center; }
.toolbar { height: 92px; background: #3b3b3b; border-radius: 16px 16px 0 0; display: flex; align-items: center; padding-left: 30px; }
.nav { margin-right: 44px; }
.nav:nth-child(3) { margin-right: 38px; }
.url { width: 2076px; height: 68px; border-radius: 34px; background: #282828; display: flex; align-items: center; padding: 0 31px 0 10px; }
.info { width: 48px; height: 48px; border-radius: 50%; background: #3b3b3b; display: flex; align-items: center; justify-content: center; }
.addr { flex: 1; margin-left: 16px; font-size: 28px; letter-spacing: -.12px; color: #e8e8e8; }
.addr em { color: #c7c7c7; }
.star { margin-left: 34px; }
.x1 { margin-left: 36px; }
.timer { width: 48px; height: 56px; margin-left: 32px; display: flex; flex-direction: column; align-items: center; justify-content: flex-end; }
.timer b { width: 48px; height: 28px; margin-top: -1px; border-radius: 6px; background: #262626; font: 600 20px/28px Inter, sans-serif; letter-spacing: -.6px; text-align: center; }
.x3 { margin-left: 34px; }
.x4 { margin-left: 43px; }
.vsep { width: 3px; height: 32px; background: #606060; }
.toolbar .vsep { margin-left: 31px; }
.x5 { margin-left: 38px; }
.x6 { margin-left: 37px; }
.x7 { margin-left: 49px; }
.bookmarks { height: 68px; background: #3b3b3b; display: grid; grid-template-columns: 316px 306px 298px 304px 312px 296px 306px 389px 57px 33px 1fr; align-items: center; padding-left: 24px; }
.bookmarks a { display: flex; align-items: center; gap: 12px; color: #c7c7c7; white-space: nowrap; }
.bookmarks .gl .i { width: 28px; height: 28px; margin: 0 2px; }
.bookmarks .gl { color: #c7c7c7; }
.bookmarks .wh .i { color: #fff; }
.bookmarks .all { gap: 16px; }

/* page */
.app { display: flex; flex: 1; min-height: 0; }
.sidebar { width: 144px; flex: none; background: #3b3c61; display: flex; flex-direction: column; align-items: center; }
.logo { margin-top: 40px; width: 40px; height: 40px; border-radius: 4px; background: #e3dffa; display: flex; align-items: center; justify-content: center; flex: none; }
.n1 { margin-top: 369px; }
.n2 { margin-top: 80px; }
.n3 { margin-top: 79px; }
.n4 { margin-top: 82px; }
.add { margin-top: 418px; width: 78px; height: 78px; border-radius: 50%; background: #321bb0; display: flex; align-items: center; justify-content: center; flex: none; }
.n6 { margin-top: 64px; }

.main { width: 1642px; flex: none; padding: 48px 0 0 64px; display: flex; flex-direction: column; }
.top { display: flex; align-items: flex-start; gap: 40px; }
.search { width: 1153px; height: 112px; border-radius: 5px; background: #3b3c61; display: flex; align-items: center; gap: 21px; padding: 2px 0 0 24px; font-size: 28px; letter-spacing: .28px; color: #9ca3af; }
.search svg { margin-top: -2px; }
.lang { margin-top: 55px; display: flex; align-items: center; gap: 15px; font-size: 28px; letter-spacing: .27px; }
.heading { margin-top: 90px; width: 1441px; height: 41px; display: flex; align-items: center; justify-content: space-between; color: #a6a7c0; font-size: 25px; letter-spacing: .24px; }
.heading h1 { font-size: 28px; font-weight: inherit; letter-spacing: .39px; }
.wtable { margin-top: 72px; width: 1441px; }
.row { display: grid; align-items: center; white-space: nowrap; letter-spacing: .6px; }
.wtable .row { grid-template-columns: 226px 171px 333px 194px 158px 143px 214px; }
.row.head { background: #3b3c61; margin-left: 1px; }
.row.head span { padding-left: 24px; }
.row.body { background: #222935; border: solid #3a4150; border-width: 2px 0; letter-spacing: .35px; align-items: stretch; }
.row.body span { display: flex; align-items: center; border-left: 2px solid #3a4150; padding: 0 0 8px 24px; }
.row.body .num { letter-spacing: .15px; }
.row.body .tight { letter-spacing: -.7px; }
.wtable .head { height: 112px; }
.wtable .body { height: 140px; width: 1439px; }
.wtable .body span:last-child { border-right: 2px solid #3a4150; }
.note { margin-top: 112px; }
.note span { letter-spacing: .75px; }
.picker { margin-top: 32px; width: 1138px; flex: 1; border: 1px solid #cfcfd6; border-bottom: 0; padding: 20px 10px 0; display: flex; }
.ranges { list-style: none; width: 451px; letter-spacing: .3px; }
.ranges li { height: 78.1px; border-bottom: 2px solid #3b3c61; padding-left: 39px; line-height: 75px; }
.cal { flex: 1; border-left: 1px solid #cfcfd6; }
.dates { height: 104px; background: #3b3c61; padding: 20px; display: flex; gap: 20px; }
.dates span { flex: 1 1 0; width: 0; background: #fff; border-radius: 7px; display: flex; align-items: center; justify-content: center; color: #87929a; letter-spacing: -.4px; }
.dates .on { box-shadow: inset 0 0 0 2px #4f8ff7; }
.months { height: 140px; padding: 0 20px; display: flex; align-items: center; justify-content: space-between; }
.arrow { width: 48px; height: 48px; border-radius: 10px; background: #eff2f7; display: flex; align-items: center; justify-content: center; padding-right: 4px; }
.arrow.next { padding: 0 0 0 4px; }
.sels { display: flex; gap: 20px; }
.sel { height: 76px; border-radius: 8px; background: #fff; color: #26283e; display: flex; align-items: center; justify-content: space-between; letter-spacing: .3px; }
.sel.m { width: 215px; padding: 0 15px 0 34px; }
.sel.y { width: 141px; padding: 0 15px 0 21px; letter-spacing: -.4px; }
.mname { height: 76px; padding-left: 40px; line-height: 76px; font-weight: 600; letter-spacing: -.24px; }
.week, .days { margin: 0 20px; display: grid; grid-template-columns: repeat(7, 1fr); text-align: center; letter-spacing: .2px; }
.week { height: 104px; line-height: 104px; }
.days { font-weight: 400; grid-auto-rows: 72px; margin-top: -20px; line-height: 72px; letter-spacing: -.6px; }
.days span { display: flex; align-items: center; justify-content: center; }
.days b { position: relative; width: 80px; height: 52px; border-radius: 26px; background: #4f8ff7; font-weight: 600; line-height: 52px; }
.days b::after { content: ""; position: absolute; left: 22px; bottom: 8px; width: 36px; height: 3.500px; border-radius: 2px; background: #fff; }

.side { flex: 1; min-width: 0; overflow: hidden; }
.map { position: relative; height: 939px; overflow: hidden; font-family: Roboto, sans-serif; letter-spacing: 0; font-feature-settings: normal; }
#mr path, #hw path { fill: none; vector-effect: non-scaling-stroke; stroke-linecap: round; stroke-linejoin: round; }
.mr.c { stroke: #edbb5a; stroke-width: 5.200px; }
.mr.f { stroke: #fcebc0; stroke-width: 2.800px; }
.hw.c { stroke: #ecaf41; stroke-width: 9px; }
.hw.f { stroke: #fcebc0; stroke-width: 5px; }
.shield { font: 400 18px Roboto, sans-serif; text-anchor: middle; fill: #3c4043; letter-spacing: 0; }
.inter { font-weight: 700; fill: #fff; }
.labels { font: 400 24px Roboto, sans-serif; text-anchor: middle; fill: #202124; stroke: rgba(255, 255, 255, .75); stroke-width: 5px; stroke-linejoin: round; paint-order: stroke; }
.labels .end { text-anchor: end; }
.labels .city { font-size: 40px; font-weight: 500; }
.labels .town { font-size: 30px; font-weight: 500; }
.labels .park { font-size: 28px; fill: #3a8040; }
.labels .it { font-style: italic; font-size: 27px; }
.google { font: 600 39px Lato, sans-serif; stroke: rgba(255, 255, 255, .8); stroke-width: 4px; paint-order: stroke; }
.full { position: absolute; left: 994px; top: 20px; width: 80px; height: 80px; background: #fff; border-radius: 4px; box-shadow: 0 2px 8px rgba(0, 0, 0, .25); display: flex; align-items: center; justify-content: center; }
.attr { position: absolute; left: 386px; right: 0; bottom: 0; height: 28px; display: grid; grid-template-columns: 197px 241px 80px 1fr; background: rgba(245, 245, 245, .75); font: 400 20px/30px Roboto, sans-serif; color: #000; letter-spacing: -.05px; white-space: nowrap; }
.attr span { padding-left: 10px; }
.ctable { margin-top: 88px; }
.ctable .row { grid-template-columns: 269px 288px 263px 400px; }
.ctable .row.head span { padding-left: 23px; }
.ctable .row.head span:nth-child(n+2) { padding-left: 24px; }
.ctable .head { height: 144px; }
.ctable .body { height: 148px; }
.ctable .big { font-size: 28px; letter-spacing: .5px; }
.ctable .big.num { letter-spacing: .23px; }
```
